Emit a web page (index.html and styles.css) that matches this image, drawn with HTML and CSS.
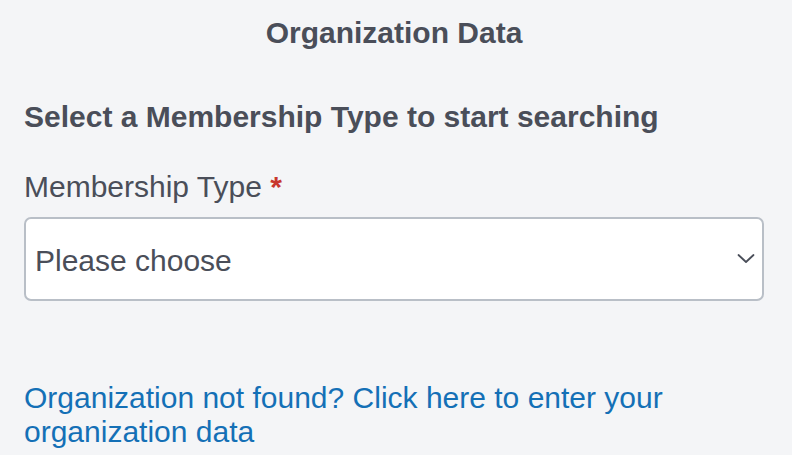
FILE: index.html
```html
<!DOCTYPE html>
<html lang="en">
<head>
    <meta charset="UTF-8">
    <meta name="viewport" content="width=device-width, initial-scale=1.0">
    <title>Organization Data</title>
    <link rel="stylesheet" href="styles.css">
</head>
<body>

    <div class="container">
        <h1 class="page-title">Organization Data</h1>

        <h2 class="section-title">Select a Membership Type to start searching</h2>

        <div class="field">
            <label for="membershipType" class="field-label">Membership Type <span class="required">*</span></label>
            <div class="select-wrap">
                <select id="membershipType" class="select">
                    <option value="">Please choose</option>
                    <option value="individual">Individual</option>
                    <option value="organization">Organization</option>
                </select>
                <svg class="chevron" width="18" height="11" viewBox="0 0 18 11" aria-hidden="true">
                    <path d="M1.5 2 L9 9 L16.5 2" fill="none" stroke="currentColor" stroke-width="1.8" stroke-linecap="round" stroke-linejoin="round"/>
                </svg>
            </div>
        </div>

        <a href="#" class="manual-link">Organization not found? Click here to enter your organization data</a>
    </div>

</body>
</html>
```

FILE: styles.css
```css
* {
    margin: 0;
    padding: 0;
    box-sizing: border-box;
    font-family: "Liberation Sans", Arial, sans-serif;
}

body {
    background: #f4f5f7;
    color: #4a4e59;
}

.container {
    padding: 16px 28px 0 24px;
    display: flex;
    flex-direction: column;
}

.page-title {
    font-size: 30px;
    font-weight: bold;
    line-height: 34px;
    text-align: center;
}

.section-title {
    margin-top: 50px;
    font-size: 30px;
    font-weight: bold;
    line-height: 34px;
}

.field {
    margin-top: 36px;
}

.field-label {
    display: block;
    font-size: 30px;
    line-height: 34px;
}

.required {
    color: #c8372d;
    font-weight: bold;
}

.select-wrap {
    position: relative;
    margin-top: 13px;
}

.select {
    appearance: none;
    -webkit-appearance: none;
    width: 100%;
    height: 84px;
    padding: 2px 48px 0 9px;
    font-size: 30px;
    color: #4a4e59;
    background: #ffffff;
    border: 2px solid #b9bfc7;
    border-radius: 7px;
    outline: none;
}

/* panah dropdown */
.chevron {
    position: absolute;
    right: 9px;
    top: 36px;
    color: #4a4e59;
    pointer-events: none;
}

.manual-link {
    margin-top: 80px;
    font-size: 30px;
    line-height: 34px;
    color: #1470b6;
    text-decoration: none;
}
```
